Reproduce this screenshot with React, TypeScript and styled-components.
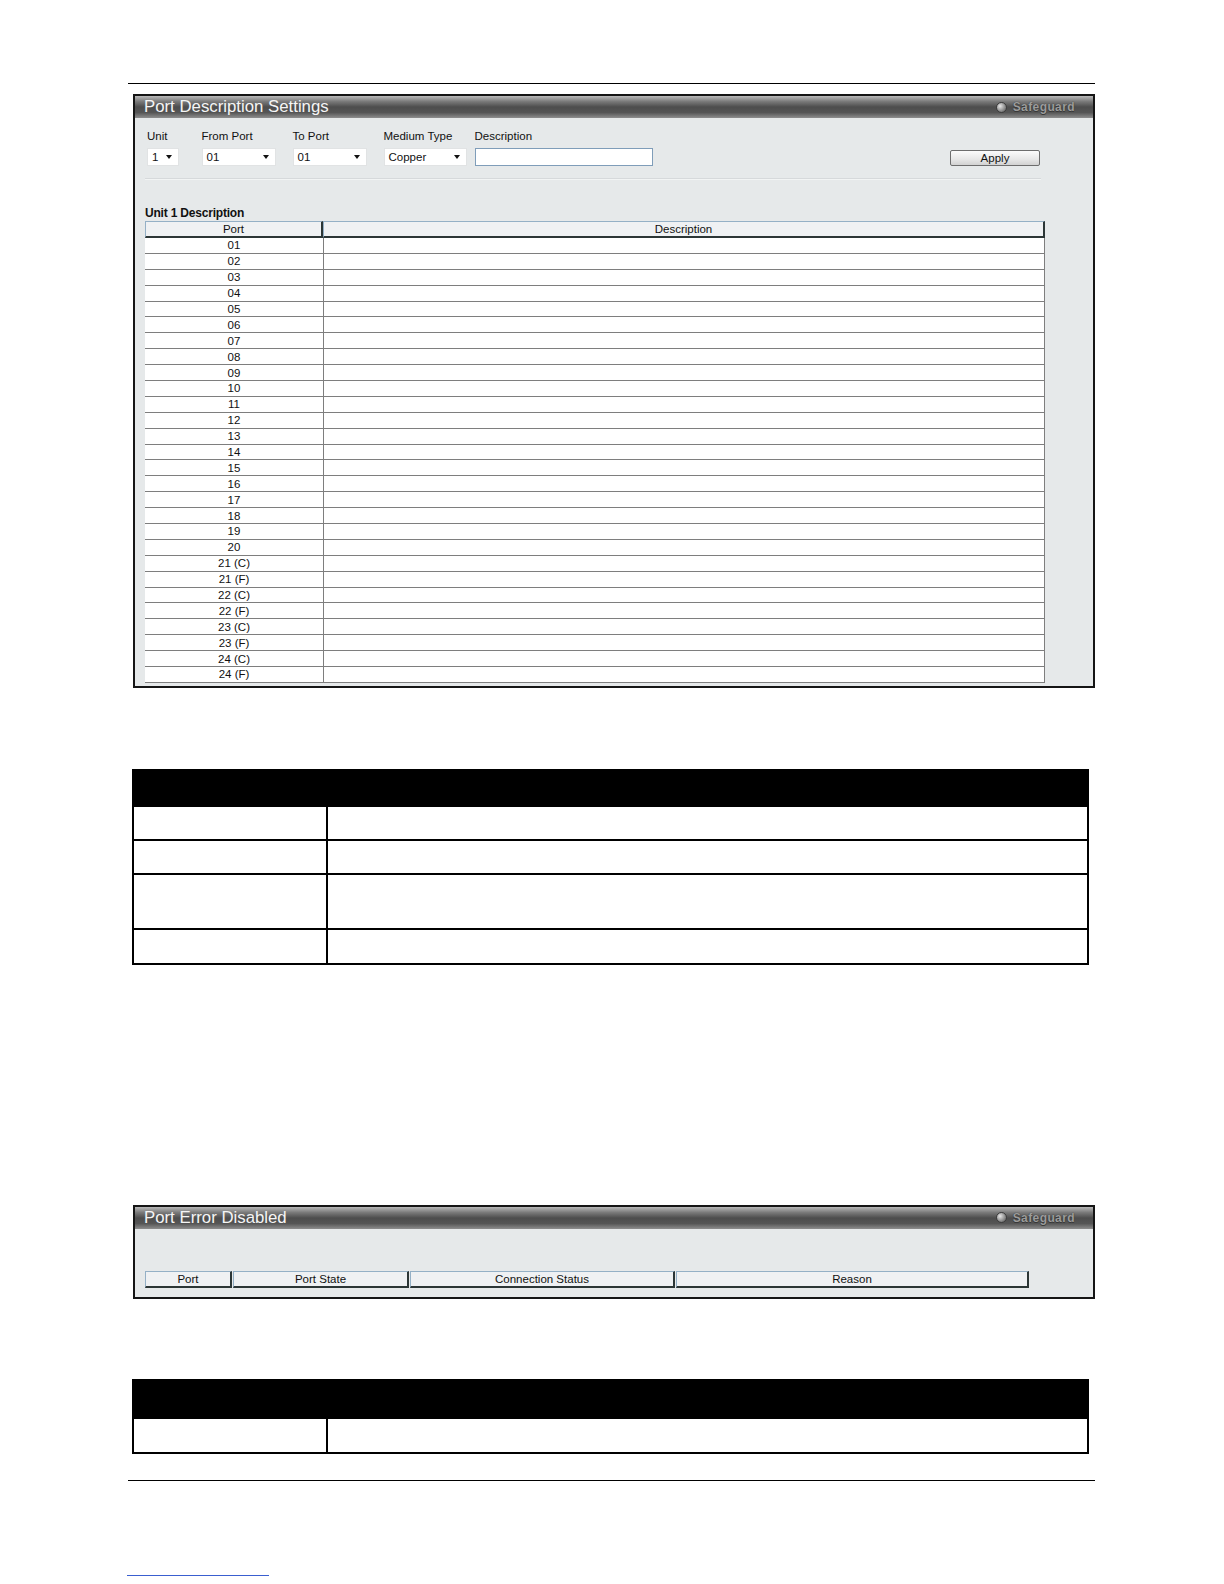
import styled, { createGlobalStyle } from "styled-components";

const GlobalStyle = createGlobalStyle`
  html, body {
    margin: 0;
    background: #ffffff;
    font-family: "Liberation Sans", Arial, sans-serif;
    overflow: hidden;
  }
`;

const ports = [
  "01", "02", "03", "04", "05", "06", "07", "08", "09", "10",
  "11", "12", "13", "14", "15", "16", "17", "18", "19", "20",
  "21 (C)", "21 (F)", "22 (C)", "22 (F)", "23 (C)", "23 (F)", "24 (C)", "24 (F)",
];

const ROW_H = 445 / 28;

const Page = styled.div`
  width: 967px;
  margin-left: 128px;
  padding-top: 83px;
`;

const Rule = styled.div<{ gap: number }>`
  height: 1px;
  background: #000;
  margin-top: ${(p) => p.gap}px;
`;

const Panel = styled.div<{ gap: number }>`
  box-sizing: border-box;
  width: 962px;
  margin: ${(p) => p.gap}px 0 0 5px;
  border: 2px solid #151515;
  background: #e6e9ea;
`;

const PanelHeader = styled.div`
  height: 22px;
  display: flex;
  align-items: center;
  justify-content: space-between;
  padding: 0 18px 0 9px;
  background: linear-gradient(
    to bottom,
    #b9b9b9 0%,
    #7a7a7a 25%,
    #4d4d4d 50%,
    #555555 75%,
    #8e8e8e 100%
  );
`;

const PanelTitle = styled.span`
  color: #f5f5f5;
  font-size: 16.8px;
`;

const Safeguard = styled.div`
  display: flex;
  align-items: center;
  gap: 6px;
  color: #9b9b9b;
  font-size: 12px;
  font-weight: bold;
  letter-spacing: 0.4px;
  text-shadow: 0 0 1px #2e2e2e, 0 1px 0 #3a3a3a;
`;

const Lamp = styled.span`
  width: 9px;
  height: 9px;
  border-radius: 50%;
  background: radial-gradient(circle at 35% 35%, #e6e6e6, #8a8a8a 60%, #555 100%);
  border: 1px solid #3c3c3c;
`;

const PanelBody = styled.div<{ top: number; bottom: number }>`
  padding: ${(p) => p.top}px 0 ${(p) => p.bottom}px 10px;
`;

const FormRow = styled.div`
  display: flex;
  align-items: flex-end;
  padding-left: 2px;
`;

const Field = styled.div<{ w: number }>`
  width: ${(p) => p.w}px;
  display: flex;
  flex-direction: column;
  gap: 5px;
`;

const Label = styled.label`
  font-size: 11.5px;
  line-height: 13px;
  color: #111;
`;

const FakeSelect = styled.div<{ w: number }>`
  box-sizing: border-box;
  width: ${(p) => p.w}px;
  height: 17.5px;
  background: #fff;
  border: 1px solid #e1e3e4;
  display: flex;
  align-items: center;
  justify-content: space-between;
  padding: 0 6px 0 4px;
  font-size: 11.5px;
  color: #111;

  &::after {
    content: "";
    border-left: 3.5px solid transparent;
    border-right: 3.5px solid transparent;
    border-top: 4px solid #111;
  }
`;

const TextInput = styled.div`
  box-sizing: border-box;
  width: 178px;
  height: 17.5px;
  background: #fff;
  border: 1px solid #7f9db9;
`;

const ApplyButton = styled.button`
  box-sizing: border-box;
  margin-left: auto;
  margin-right: 53px;
  width: 90px;
  height: 16px;
  padding: 0;
  font-family: "Liberation Sans", Arial, sans-serif;
  font-size: 11.5px;
  color: #111;
  background: linear-gradient(to bottom, #fbfbfb, #e6e6e6 60%, #d2d2d2);
  border: 1px solid #6d6d6d;
  border-radius: 2px;
`;

const Separator = styled.div`
  width: 896px;
  height: 1px;
  margin-top: 12px;
  background: #d6d9db;
  border-bottom: 1px solid #f2f4f4;
`;

const SectionTitle = styled.div`
  margin-top: 27px;
  font-size: 12px;
  line-height: 13px;
  font-weight: bold;
  color: #111;
  letter-spacing: -0.2px;
`;

const DescTable = styled.div`
  width: 900px;
  margin-top: 1.5px;
`;

const HeadRow = styled.div`
  display: flex;
  height: 17px;
`;

const HeadCell = styled.div<{ w?: number }>`
  box-sizing: border-box;
  ${(p) => (p.w ? `width: ${p.w}px;` : "flex: 1;")}
  height: 17px;
  display: flex;
  align-items: center;
  justify-content: center;
  font-size: 11.5px;
  color: #111;
  background: #eff1f3;
  border-top: 1px solid #94b0c6;
  border-left: 1px solid #94b0c6;
  border-right: 2px solid #2c3636;
  border-bottom: 2px solid #2c3636;
`;

const BodyRow = styled.div`
  box-sizing: border-box;
  display: flex;
  height: ${ROW_H}px;
  background: #fff;
  border-bottom: 1px solid #7e7e7e;
  border-right: 1px solid #7e7e7e;
`;

const PortCell = styled.div`
  width: 178px;
  display: flex;
  align-items: center;
  justify-content: center;
  font-size: 11.5px;
  color: #111;
  border-right: 1px solid #7e7e7e;
`;

const EmptyCell = styled.div`
  flex: 1;
`;

const ErrorHead = styled.div`
  display: flex;
  gap: 1px;
`;

const DocTable = styled.div<{ gap: number }>`
  box-sizing: border-box;
  width: 957px;
  margin: ${(p) => p.gap}px 0 0 4px;
  border-left: 2px solid #000;
  border-right: 2px solid #000;
`;

const DocHead = styled.div<{ h: number }>`
  height: ${(p) => p.h}px;
  background: #000;
`;

const DocRow = styled.div<{ h: number }>`
  box-sizing: border-box;
  display: flex;
  height: ${(p) => p.h}px;
  border-bottom: 2px solid #000;
`;

const DocKey = styled.div`
  width: 192px;
  border-right: 2px solid #000;
`;

const DocValue = styled.div`
  flex: 1;
`;

const FootLink = styled.div`
  width: 142px;
  height: 1px;
  margin: 94px 0 0 -1px;
  background: #3a5fd0;
`;

const App = () => {
  return (
    <>
      <GlobalStyle />
      <Page>
        <Rule gap={0} />

        <Panel gap={10}>
          <PanelHeader>
            <PanelTitle>Port Description Settings</PanelTitle>
            <Safeguard>
              <Lamp />
              Safeguard
            </Safeguard>
          </PanelHeader>
          <PanelBody top={12} bottom={3}>
            <FormRow>
              <Field w={54.5}>
                <Label>Unit</Label>
                <FakeSelect w={31.5}>1</FakeSelect>
              </Field>
              <Field w={91}>
                <Label>From Port</Label>
                <FakeSelect w={74}>01</FakeSelect>
              </Field>
              <Field w={91}>
                <Label>To Port</Label>
                <FakeSelect w={74}>01</FakeSelect>
              </Field>
              <Field w={91}>
                <Label>Medium Type</Label>
                <FakeSelect w={83}>Copper</FakeSelect>
              </Field>
              <Field w={178}>
                <Label>Description</Label>
                <TextInput />
              </Field>
              <ApplyButton>Apply</ApplyButton>
            </FormRow>
            <Separator />
            <SectionTitle>Unit 1 Description</SectionTitle>
            <DescTable>
              <HeadRow>
                <HeadCell w={178}>Port</HeadCell>
                <HeadCell>Description</HeadCell>
              </HeadRow>
              {ports.map((port) => (
                <BodyRow key={port}>
                  <PortCell>{port}</PortCell>
                  <EmptyCell />
                </BodyRow>
              ))}
            </DescTable>
          </PanelBody>
        </Panel>

        <DocTable gap={81}>
          <DocHead h={38} />
          <DocRow h={34}>
            <DocKey />
            <DocValue />
          </DocRow>
          <DocRow h={34}>
            <DocKey />
            <DocValue />
          </DocRow>
          <DocRow h={55}>
            <DocKey />
            <DocValue />
          </DocRow>
          <DocRow h={35}>
            <DocKey />
            <DocValue />
          </DocRow>
        </DocTable>

        <Panel gap={240}>
          <PanelHeader>
            <PanelTitle>Port Error Disabled</PanelTitle>
            <Safeguard>
              <Lamp />
              Safeguard
            </Safeguard>
          </PanelHeader>
          <PanelBody top={42} bottom={9}>
            <ErrorHead>
              <HeadCell w={87}>Port</HeadCell>
              <HeadCell w={176}>Port State</HeadCell>
              <HeadCell w={265}>Connection Status</HeadCell>
              <HeadCell w={353}>Reason</HeadCell>
            </ErrorHead>
          </PanelBody>
        </Panel>

        <DocTable gap={80}>
          <DocHead h={40} />
          <DocRow h={35}>
            <DocKey />
            <DocValue />
          </DocRow>
        </DocTable>

        <Rule gap={26} />
        <FootLink />
      </Page>
    </>
  );
};

export default App;
